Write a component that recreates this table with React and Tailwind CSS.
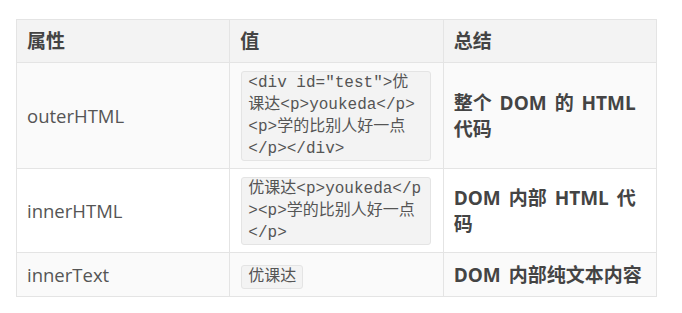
import React from 'react';

const rows = [
  {
    name: 'outerHTML',
    code: ['<div id="test">优', '课达<p>youkeda</p>', '<p>学的比别人好一点', '</p></div>'],
    summary: '整个 DOM 的 HTML 代码',
    bg: 'bg-[#fafafa]',
  },
  {
    name: 'innerHTML',
    code: ['优课达<p>youkeda</p', '><p>学的比别人好一点', '</p>'],
    summary: 'DOM 内部 HTML 代码',
    bg: 'bg-white',
  },
  {
    name: 'innerText',
    code: ['优课达'],
    summary: 'DOM 内部纯文本内容',
    bg: 'bg-[#fafafa]',
  },
];

const App = () => {
  return (
    <div
      className="w-[682px] h-[313px] bg-white pt-[19px] pl-[16px]"
      style={{ fontFamily: '"Open Sans", "Noto Sans CJK SC", sans-serif' }}
    >
      <table className="w-[641px] table-fixed border-collapse text-[18.5px] leading-[27px] text-[#555]">
        <thead>
          <tr className="bg-[#f3f3f3]">
            <th className="w-1/3 border border-[#e4e4e4] px-[10px] py-[7.5px] text-left text-[19px] font-bold text-[#444]">属性</th>
            <th className="w-1/3 border border-[#e4e4e4] px-[10px] py-[7.5px] text-left text-[19px] font-bold text-[#444]">值</th>
            <th className="w-1/3 border border-[#e4e4e4] px-[10px] py-[7.5px] text-left text-[19px] font-bold text-[#444]">总结</th>
          </tr>
        </thead>
        <tbody>
          {rows.map((row) => (
            <tr key={row.name} className={row.bg}>
              <td className="border border-[#e4e4e4] px-[10px] py-[7.5px] align-middle">{row.name}</td>
              <td className="border border-[#e4e4e4] pl-[11px] pr-[12px] py-[7.5px] align-middle">
                <code
                  className={`${row.code.length > 1 ? 'w-full' : ''} inline-block align-middle rounded-[3px] border border-[#e4e4e4] bg-[#f3f3f3] px-[6px] text-[16px] leading-[22px] text-[#555]`}
                  style={{ fontFamily: '"Liberation Mono", "Noto Sans CJK SC", monospace' }}
                >
                  {row.code.map((line, i) => (
                    <React.Fragment key={i}>
                      {i > 0 && <br />}
                      {line}
                    </React.Fragment>
                  ))}
                </code>
              </td>
              <td className="border border-[#e4e4e4] px-[10px] py-[7.5px] align-middle text-[19px] leading-[26px] [word-spacing:3px] font-bold text-[#444]">
                {row.summary}
              </td>
            </tr>
          ))}
        </tbody>
      </table>
    </div>
  );
};

export default App;
